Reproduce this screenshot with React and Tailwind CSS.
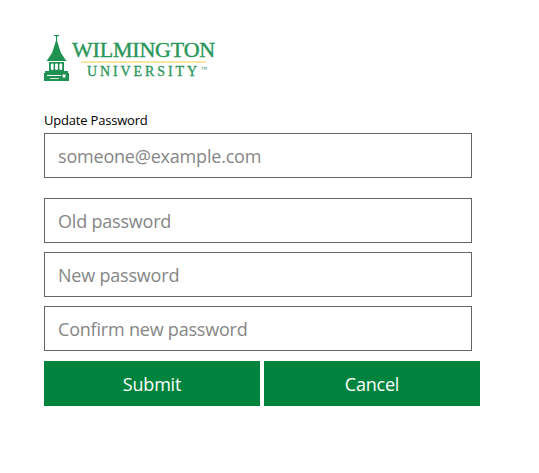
const font = { fontFamily: '"Open Sans", "Noto Sans", sans-serif' };

function Logo() {
  return (
    <div className="flex h-[46px] items-start">
      <svg width="25" height="46" viewBox="0 0 25 46" className="shrink-0">
        <g fill="#1f9150">
          <rect x="10" y="0" width="5" height="1.2" />
          <rect x="12" y="1" width="1.1" height="5" />
          <path d="M12.5 4 L15 12 L17 18 L21 24 L22.5 26 L2.5 26 L4 24 L8 18 L10 12 Z" />
          <path d="M5 27 H20 V36 H5 Z" />
          <path d="M1 36 H24 V38 H25 V46 H0 V38 H1 Z" />
        </g>
        <g fill="#ffffff">
          <rect x="6.8" y="28.5" width="2.8" height="6.5" rx="1.2" />
          <rect x="11.1" y="28.5" width="2.8" height="6.5" rx="1.2" />
          <rect x="15.4" y="28.5" width="2.8" height="6.5" rx="1.2" />
          <rect x="3" y="40" width="14" height="1" />
          <rect x="18.5" y="39.5" width="3" height="3" />
          <rect x="6" y="43" width="9" height="0.8" />
        </g>
      </svg>
      <div className="ml-[3px] w-[143px] pt-[5px]" style={{ fontFamily: '"Liberation Serif", serif' }}>
        <div className="text-[22px] leading-[20px] tracking-[-0.2px] text-[#2a9659] whitespace-nowrap [-webkit-text-stroke:0.4px_#2a9659]">
          WILMINGTON
        </div>
        <div className="ml-[9px] mt-[1px] h-[2px] w-[125px] bg-[#f7e7a6]" />
        <div className="ml-[15px] mt-[2px] flex items-start text-[14px] leading-[14px] tracking-[2.9px] text-[#2a9659] whitespace-nowrap [-webkit-text-stroke:0.3px_#2a9659]">
          <span>UNIVERSITY</span>
          <span className="ml-[1px] text-[6px] leading-[8px] tracking-normal [-webkit-text-stroke:0px]">™</span>
        </div>
      </div>
    </div>
  );
}

function Field({ placeholder, className = "" }) {
  return (
    <input
      readOnly
      placeholder={placeholder}
      style={font}
      className={`block h-[45px] w-[428px] border border-[#666666] bg-white px-[13px] text-[18px] tracking-[-0.2px] text-black outline-none placeholder:text-[#868686] ${className}`}
    />
  );
}

function Action({ children }) {
  return (
    <button
      style={font}
      className="h-[45px] w-[216px] bg-[#00833d] pt-[1px] text-center text-[18px] tracking-[-0.2px] text-white"
    >
      {children}
    </button>
  );
}

export default function App() {
  return (
    <div className="min-h-[473px] bg-white pl-[44px] pt-[35px]" style={font}>
      <Logo />
      <label className="mt-[29px] block text-[13px] leading-[20px] tracking-[-0.2px] text-black">Update Password</label>
      <Field placeholder="someone@example.com" className="mt-[3px]" />
      <Field placeholder="Old password" className="mt-[20px]" />
      <Field placeholder="New password" className="mt-[9px]" />
      <Field placeholder="Confirm new password" className="mt-[9px]" />
      <div className="mt-[10px] flex gap-[4px]">
        <Action>Submit</Action>
        <Action>Cancel</Action>
      </div>
    </div>
  );
}
